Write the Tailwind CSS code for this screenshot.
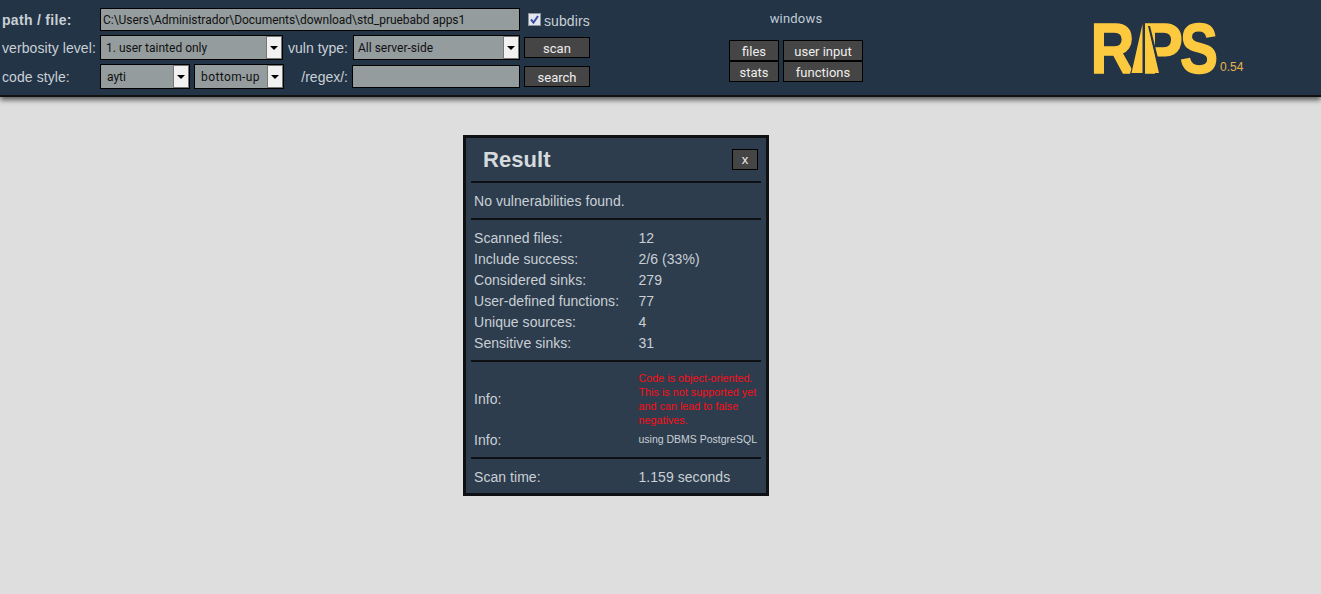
<!DOCTYPE html>
<html>
<head>
<meta charset="utf-8">
<script src="https://cdn.jsdelivr.net/npm/@tailwindcss/browser@4"></script>
</head>
<body class="bg-[#dedede] font-['Liberation_Sans',Arial,sans-serif] text-[14px] text-[#c9d0d5] h-[594px] overflow-hidden">
<header class="h-[97px] bg-[#233446] border-b-2 border-[#111] shadow-[0_3px_5px_rgba(0,0,0,0.6)] flex relative">
  <div class="w-[728px] shrink-0 flex flex-col pl-[2px] pt-[8px]">
    <div class="flex items-center h-[23px]">
      <div class="w-[98px] font-bold tracking-[0.3px] pt-[2px]">path / file:</div>
      <input value="C:\Users\Administrador\Documents\download\std_pruebabd apps1" class="w-[420px] h-[23px] bg-[#949c9e] border border-black px-[2px] text-[12px] tracking-[-0.03px] text-[#111] font-['Roboto',sans-serif]">
      <div class="ml-[8px] mt-[-1px] w-[13px] h-[13px] bg-[#e4e7ec] border border-[#8a94a0] flex items-center justify-center">
        <svg width="11" height="11" viewBox="0 0 11 11"><path d="M2 5.5 L4.5 8.5 L9 2" fill="none" stroke="#3b4fa8" stroke-width="2"/></svg>
      </div>
      <div class="ml-[3px] pt-[3px] tracking-[0.1px]">subdirs</div>
    </div>
    <div class="flex items-center h-[25px] mt-[4px]">
      <div class="w-[98px] pt-[2px] tracking-[0.08px]">verbosity level:</div>
      <div class="w-[183px] h-[25px] bg-[#949c9e] border border-black flex items-center text-[12px] text-[#111] font-['Roboto',sans-serif]">
        <span class="flex-1 pl-[5px] pt-[1px]">1. user tainted only</span>
        <span class="w-[16px] h-full bg-[#f1f1f1] border border-[#777] flex items-center justify-center"><span class="border-x-[4px] border-x-transparent border-t-[4px] border-t-black"></span></span>
      </div>
      <div class="w-[70px] text-right pr-[5px] pt-[2px]">vuln type:</div>
      <div class="w-[167px] h-[25px] bg-[#949c9e] border border-black flex items-center text-[12px] text-[#111] font-['Roboto',sans-serif]">
        <span class="flex-1 pl-[4px] pt-[1px]">All server-side</span>
        <span class="w-[16px] h-full bg-[#f1f1f1] border border-[#777] flex items-center justify-center"><span class="border-x-[4px] border-x-transparent border-t-[4px] border-t-black"></span></span>
      </div>
      <button class="ml-[4px] w-[66px] h-[21px] bg-[#454545] border border-black text-[#eee] text-[13px] font-['Roboto',sans-serif] pt-[1px]">scan</button>
    </div>
    <div class="flex items-center h-[25px] mt-[4px]">
      <div class="w-[98px] pt-[2px] tracking-[0.08px]">code style:</div>
      <div class="w-[90px] h-[25px] bg-[#949c9e] border border-black flex items-center text-[12px] text-[#111] font-['Roboto',sans-serif]">
        <span class="flex-1 pl-[6px] pt-[1px]">ayti</span>
        <span class="w-[16px] h-full bg-[#f1f1f1] border border-[#777] flex items-center justify-center"><span class="border-x-[4px] border-x-transparent border-t-[4px] border-t-black"></span></span>
      </div>
      <div class="ml-[4px] w-[90px] h-[25px] bg-[#949c9e] border border-black flex items-center text-[12px] text-[#111] font-['Roboto',sans-serif]">
        <span class="flex-1 pl-[6px] pt-[1px] tracking-[0.4px]">bottom-up</span>
        <span class="w-[16px] h-full bg-[#f1f1f1] border border-[#777] flex items-center justify-center"><span class="border-x-[4px] border-x-transparent border-t-[4px] border-t-black"></span></span>
      </div>
      <div class="w-[68px] text-right pr-[4px] pt-[2px]">/regex/:</div>
      <input class="w-[168px] h-[23px] bg-[#949c9e] border border-black">
      <button class="ml-[4px] w-[66px] h-[21px] bg-[#454545] border border-black text-[#eee] text-[13px] font-['Roboto',sans-serif] pt-[1px]">search</button>
    </div>
  </div>
  <div class="w-[136px] shrink-0 pt-[10px] flex flex-col items-start">
    <div class="w-[134px] text-center pl-[2px] text-[#c0cbd6] text-[13px] font-['Roboto',sans-serif] h-[18px] leading-[18px] tracking-[0.2px]">windows</div>
    <div class="mt-[12px] grid grid-cols-[50px_80px] gap-x-[4px] ml-[1px] text-[13px] font-['Roboto',sans-serif] text-[#eee]">
      <button class="h-[21px] bg-[#454545] border border-black leading-none pt-[2px]">files</button>
      <button class="h-[21px] bg-[#454545] border border-black leading-none pt-[2px]">user input</button>
      <button class="h-[21px] bg-[#454545] border border-black leading-none pt-[2px]">stats</button>
      <button class="h-[21px] bg-[#454545] border border-black leading-none pt-[2px]">functions</button>
    </div>
  </div>
  <div class="ml-[226px] flex items-start">
    <svg width="130" height="90" viewBox="0 -20 130 90" class="shrink-0 font-['Liberation_Sans',sans-serif] font-bold" fill="#fdc93f" role="img" aria-label="RIPS">
      <text x="0.5" y="53" font-size="70" textLength="44" lengthAdjust="spacingAndGlyphs" stroke="#fdc93f" stroke-width="1.5">R</text>
      <text x="51" y="53" font-size="70" textLength="42" lengthAdjust="spacingAndGlyphs" stroke="#fdc93f" stroke-width="1.5">P</text>
      <path d="M57.5 6 L60 6 L72 54 L69 54 Z" fill="#233446"/>
      <path d="M55 2 L55 54 L40 54 L44 40 L53 2 Z" fill="#233446"/>
      <path d="M52.5 4 L41.5 53 L52.5 53 Z M55.5 4 L56.5 53 L69 53 L57.5 4 Z" fill="#fdc93f"/>
      <text x="90" y="53" font-size="70" textLength="38" lengthAdjust="spacingAndGlyphs" stroke="#fdc93f" stroke-width="1.5">S</text>
    </svg>
    <div class="mt-[61px] text-[#e9b24a] text-[12px] leading-[12px]">0.54</div>
  </div>
</header>
<main class="ml-[463px] mt-[38px] w-[306px] h-[361px] bg-[#2d3d4e] border-[3px] border-[#0e1013] px-[5px] tracking-[0.05px]">
  <div class="flex items-center h-[45px] pl-[12px] pr-[3px] border-b-2 border-[#0e1013]">
    <div class="flex-1 text-[22px] font-bold text-[#d5dadd] pb-[1px]">Result</div>
    <button class="w-[26px] h-[21px] bg-[#454545] border border-black text-[#eee] text-[13px] leading-none">x</button>
  </div>
  <div class="h-[37px] flex items-center px-[3px] border-b-2 border-[#0e1013] pt-[1px]">No vulnerabilities found.</div>
  <div class="border-b-2 border-[#0e1013] px-[3px] pt-[8px] pb-[6px] grid grid-cols-[164.5px_1fr] auto-rows-[21px] items-center">
    <div>Scanned files:</div><div>12</div>
    <div>Include success:</div><div>2/6 (33%)</div>
    <div>Considered sinks:</div><div>279</div>
    <div>User-defined functions:</div><div>77</div>
    <div>Unique sources:</div><div>4</div>
    <div>Sensitive sinks:</div><div>31</div>
  </div>
  <div class="border-b-2 border-[#0e1013] px-[3px] pt-[9px] pb-[8px] grid grid-cols-[164.5px_1fr] items-center">
    <div>Info:</div><div class="text-[10.7px] leading-[14px] text-[#fb0d16]">Code is object-oriented.<br>This is not supported yet<br>and can lead to false<br>negatives.</div>
    <div class="h-[22px] leading-[26px]">Info:</div><div class="text-[10.5px] tracking-normal leading-[24px] h-[22px] whitespace-nowrap">using DBMS PostgreSQL</div>
  </div>
  <div class="h-[36px] grid grid-cols-[164.5px_1fr] items-center px-[3px]"><div>Scan time:</div><div>1.159 seconds</div></div>
</main>
</body>
</html>
